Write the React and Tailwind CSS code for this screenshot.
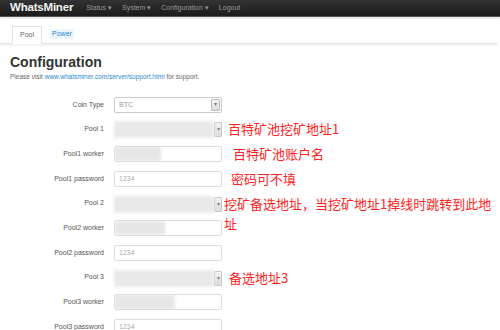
import React from 'react'

const rows = [
    { label: 'Coin Type', kind: 'select', value: 'BTC' },
    { label: 'Pool 1', kind: 'pool', blur: 99, note: '百特矿池挖矿地址1', noteMl: 'ml-[6px]' },
    { label: 'Pool1 worker', kind: 'worker', blur: 46, note: '百特矿池账户名', noteMl: 'ml-[11px]' },
    { label: 'Pool1 password', kind: 'text', value: '1234', note: '密码可不填', noteMl: 'ml-[9px]' },
    { label: 'Pool 2', kind: 'pool', blur: 99, note: '挖矿备选地址，当挖矿地址1掉线时跳转到此地址', noteMl: 'ml-[2px]' },
    { label: 'Pool2 worker', kind: 'worker', blur: 50 },
    { label: 'Pool2 password', kind: 'text', value: '1234' },
    { label: 'Pool 3', kind: 'pool', blur: 99, note: '备选地址3', noteMl: 'ml-[7px]' },
    { label: 'Pool3 worker', kind: 'worker', blur: 60 },
    { label: 'Pool3 password', kind: 'text', value: '1234' },
]

const Field = ({ row }) => {
    if (row.kind === 'select') {
        return (
            <div className="w-[108px] h-[16px] border border-[#ccc] rounded-[2px] bg-white flex items-center shrink-0">
                <span className="flex-1 pl-[4px] text-[7px] text-[#999]">{row.value}</span>
                <span className="w-[9px] h-[12px] mr-[1px] border border-[#bbb] rounded-[1px] bg-gradient-to-b from-[#f4f4f4] to-[#ddd] text-[6px] text-[#777] flex items-center justify-center">▾</span>
            </div>
        )
    }
    if (row.kind === 'pool') {
        return (
            <div className="w-[108px] h-[17px] flex items-center shrink-0">
                <div className="flex-1 h-full bg-[#e9e9e9] blur-[1.5px]" />
                <span className="w-[8px] h-[15px] border border-[#c8c8c8] rounded-[1px] bg-gradient-to-b from-[#f2f2f2] to-[#dcdcdc] text-[6px] text-[#888] flex items-center justify-center">▾</span>
            </div>
        )
    }
    if (row.kind === 'worker') {
        return (
            <div className="w-[108px] h-[16px] border border-[#ddd] rounded-[2px] bg-white flex items-center overflow-hidden shrink-0">
                <div style={{ width: row.blur }} className="h-full bg-[#e6e6e6] blur-[1.5px]" />
            </div>
        )
    }
    return (
        <div className="w-[108px] h-[16px] border border-[#ddd] rounded-[2px] bg-white flex items-center shrink-0">
            <span className="pl-[4px] text-[7px] text-[#aaa]">{row.value}</span>
        </div>
    )
}

const App = () => {
    return (
        <div className="w-[500px] h-[330px] overflow-hidden bg-white font-['Liberation_Sans',Arial,sans-serif]">
            {/* NAVBAR */}
            <div className="h-[17px] bg-gradient-to-b from-[#333] to-[#1b1b1b] border-b border-[#555] shadow-[0_1px_2px_rgba(0,0,0,0.15)] flex items-center px-[10px]">
                <span className="text-[11.5px] font-bold text-[#f2f2f2] tracking-[-0.2px]">WhatsMiner</span>
                <div className="flex items-center gap-[10px] ml-[13px] text-[7px] text-[#9a9a9a]">
                    <span>Status ▾</span>
                    <span>System ▾</span>
                    <span>Configuration ▾</span>
                    <span>Logout</span>
                </div>
            </div>

            {/* TABS */}
            <div className="mt-[9px] mr-[3px] flex items-end h-[18px] border-b border-[#e2e2e2] shadow-[0_2px_2px_rgba(0,0,0,0.05)] pl-[12px]">
                <div className="h-[18px] px-[7px] border border-[#e2e2e2] border-b-white -mb-px bg-white flex items-center text-[7px] text-[#666]">Pool</div>
                <div className="h-[18px] ml-[8px] flex items-center">
                    <span className="px-[2px] bg-[#eaf5fc] text-[7px] text-[#2a8ad0]">Power</span>
                </div>
            </div>

            {/* CONTENT */}
            <div className="px-[10px] pt-[10px]">
                <h1 className="text-[14px] leading-[16px] font-bold text-[#333]">Configuration</h1>
                <p className="mt-[2px] text-[6.5px] text-[#666]">
                    Please visit <span className="text-[#2a8ad0]">www.whatsminer.com/server/support.html</span> for support.
                </p>

                <div className="mt-[15px] flex flex-col gap-[8.7px]">
                    {rows.map((row) => (
                        <div key={row.label} className="flex items-start h-[16px] -mr-[7px]">
                            <div className="w-[94px] h-[16px] shrink-0 flex items-center justify-end text-[7px] text-[#555]">
                                {row.label}
                            </div>
                            <div className="ml-[10px] flex items-start">
                                <Field row={row} />
                            </div>
                            {row.note && (
                                <span className={`${row.noteMl} -mt-[2px] flex-1 min-w-0 text-[13px] leading-[20px] text-[#f22] font-['Noto_Sans_CJK_SC',sans-serif]`}>
                                    {row.note}
                                </span>
                            )}
                        </div>
                    ))}
                </div>
            </div>
        </div>
    )
}

export default App
